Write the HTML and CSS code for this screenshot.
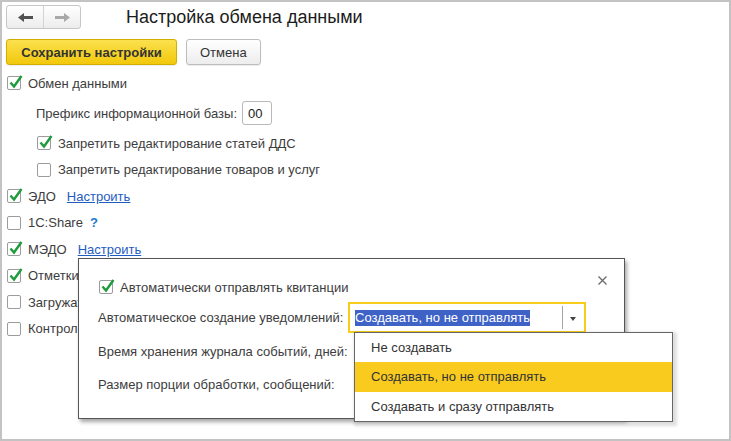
FILE: index.html
```html
<!DOCTYPE html>
<html lang="ru">
<head>
    <meta charset="UTF-8">
    <title>Настройка обмена данными</title>
    <link rel="stylesheet" href="styles.css">
</head>
<body>
<div class="window">

    <div class="head">
        <div class="nav">
            <span class="nav-btn">
                <svg width="15" height="9" viewBox="0 0 15 9"><polygon points="0,4.5 6,0 6,3 15,3 15,6 6,6 6,9" fill="#505050"/></svg>
            </span>
            <span class="nav-btn">
                <svg width="15" height="9" viewBox="0 0 15 9"><polygon points="15,4.5 9,0 9,3 0,3 0,6 9,6 9,9" fill="#a8a8a8"/></svg>
            </span>
        </div>
        <h1 class="title">Настройка обмена данными</h1>
    </div>

    <div class="toolbar">
        <button class="btn btn-main">Сохранить настройки</button>
        <button class="btn">Отмена</button>
    </div>

    <div class="options">
        <div class="row row-first">
            <span class="check on"><svg width="16" height="16" viewBox="0 0 16 16"><path d="M2.5 8.5 L6 12.5 L13.5 2" /></svg></span>
            Обмен данными
        </div>
        <div class="row row-prefix sub">
            Префикс информационной базы:
            <span class="field">00</span>
        </div>
        <div class="row sub">
            <span class="check on"><svg width="16" height="16" viewBox="0 0 16 16"><path d="M2.5 8.5 L6 12.5 L13.5 2" /></svg></span>
            Запретить редактирование статей ДДС
        </div>
        <div class="row sub">
            <span class="check"></span>
            Запретить редактирование товаров и услуг
        </div>
        <div class="row">
            <span class="check on"><svg width="16" height="16" viewBox="0 0 16 16"><path d="M2.5 8.5 L6 12.5 L13.5 2" /></svg></span>
            ЭДО <a class="link" href="#">Настроить</a>
        </div>
        <div class="row">
            <span class="check"></span>
            1C:Share <span class="help">?</span>
        </div>
        <div class="row">
            <span class="check on"><svg width="16" height="16" viewBox="0 0 16 16"><path d="M2.5 8.5 L6 12.5 L13.5 2" /></svg></span>
            МЭДО <a class="link link-medo" href="#">Настроить</a>
        </div>
        <!-- эти строки закрыты окном, видно только начало -->
        <div class="row cut">
            <span class="check on"><svg width="16" height="16" viewBox="0 0 16 16"><path d="M2.5 8.5 L6 12.5 L13.5 2" /></svg></span>
            <span class="cut-text">Отметки о прочтении</span>
        </div>
        <div class="row cut">
            <span class="check"></span>
            <span class="cut-text">Загружать документы</span>
        </div>
        <div class="row cut">
            <span class="check"></span>
            <span class="cut-text">Контролировать сроки</span>
        </div>
    </div>

    <!-- окно настройки МЭДО -->
    <div class="popup">
        <span class="close">
            <svg width="9" height="9" viewBox="0 0 9 9"><path d="M0.5 0.5 L8.5 8.5 M8.5 0.5 L0.5 8.5" /></svg>
        </span>
        <div class="prow prow-check">
            <span class="check on"><svg width="16" height="16" viewBox="0 0 16 16"><path d="M2.5 8.5 L6 12.5 L13.5 2" /></svg></span>
            Автоматически отправлять квитанции
        </div>
        <div class="prow">
            <span class="plabel">Автоматическое создание уведомлений:</span>
            <div class="combo">
                <span class="combo-text"><span class="selected">Создавать, но не отправлять</span></span>
                <span class="combo-arrow"></span>
            </div>
        </div>
        <div class="prow">
            <span class="plabel">Время хранения журнала событий, дней:</span>
        </div>
        <div class="prow">
            <span class="plabel">Размер порции обработки, сообщений:</span>
        </div>
    </div>

    <ul class="dropdown">
        <li>Не создавать</li>
        <li class="active">Создавать, но не отправлять</li>
        <li>Создавать и сразу отправлять</li>
    </ul>

</div>
</body>
</html>
```

FILE: styles.css
```css
body {
    margin: 0;
    font-family: "Liberation Sans", Arial, sans-serif;
    font-size: 13px;
    color: #3d3d3d;
    background: #fff;
}

.window {
    position: relative;
    width: 731px;
    height: 441px;
    box-sizing: border-box;
    border: 2px solid #c3c3c3;
    background: #fff;
}

/* header */
.head {
    display: flex;
    align-items: center;
    padding: 3px 4px 0;
}

.nav {
    display: flex;
    height: 24px;
    box-sizing: border-box;
    border: 1px solid #c6c6c6;
    border-radius: 3px;
    background: linear-gradient(#ffffff, #ececec);
}

.nav-btn {
    width: 36px;
    display: flex;
    align-items: center;
    justify-content: center;
}

.nav-btn + .nav-btn {
    border-left: 1px solid #d4d4d4;
}

.title {
    margin: 0 0 0 45px;
    font-size: 18px;
    font-weight: normal;
    color: #1c1c1c;
}

/* buttons */
.toolbar {
    display: flex;
    gap: 9px;
    margin-top: 10px;
    padding-left: 4px;
}

.btn {
    height: 26px;
    padding: 0 13px;
    font-family: inherit;
    font-size: 13px;
    color: #333;
    border: 1px solid #bdbdbd;
    border-radius: 3px;
    background: linear-gradient(#ffffff, #ededed);
    box-shadow: 0 1px 1px rgba(0, 0, 0, 0.08);
}

.btn-main {
    width: 171px;
    font-weight: bold;
    border-color: #d3ae00;
    background: linear-gradient(#fbe14f, #f2c80c);
}

/* options */
.options {
    padding: 5px 0 0 5px;
}

.row {
    display: flex;
    align-items: center;
    height: 26.5px;
    white-space: nowrap;
}

.row-prefix {
    height: 33.5px;
    padding-left: 29px !important;
}

.sub {
    padding-left: 30px;
}

.cut-text {
    width: 50px;
    overflow: hidden;
}

.check {
    position: relative;
    flex: none;
    width: 14px;
    height: 14px;
    box-sizing: border-box;
    margin-right: 7px;
    border: 1px solid #9c9c9c;
    border-radius: 2px;
    background: #fff;
}

.check svg {
    position: absolute;
    left: 0;
    top: -3px;
}

.check path {
    fill: none;
    stroke: #1f9a3d;
    stroke-width: 2.4;
}

.field {
    display: inline-flex;
    align-items: center;
    width: 30px;
    height: 24px;
    box-sizing: border-box;
    margin-left: 5px;
    padding-left: 5px;
    border: 1px solid #b9b9b9;
    border-radius: 3px;
    color: #222;
}

.link {
    margin-left: 11px;
    color: #1f5cc0;
}

.help {
    margin-left: 7px;
    color: #2478c9;
    font-weight: bold;
}

/* popup */
.popup {
    position: absolute;
    left: 76px;
    top: 256px;
    width: 547px;
    height: 161px;
    box-sizing: border-box;
    padding: 14px 0 0 19px;
    border: 1px solid #555;
    background: #fff;
    box-shadow: 2px 3px 4px rgba(0, 0, 0, 0.35);
}

.close {
    position: absolute;
    right: 17px;
    top: 17px;
    line-height: 0;
}

.close path {
    stroke: #6a6a6a;
    stroke-width: 1.3;
}

.prow {
    display: flex;
    align-items: center;
    height: 33.5px;
    white-space: nowrap;
}

.prow-check {
    height: 28px;
    padding-left: 1px;
}

.plabel {
    width: 250px;
    flex: none;
}

.combo {
    display: flex;
    width: 238px;
    height: 31px;
    box-sizing: border-box;
    border: 2px solid #f7cd19;
    background: #fff;
}

.combo-text {
    flex: 1;
    display: flex;
    align-items: center;
    padding-left: 5px;
}

.selected {
    line-height: 16px;
    background: #3e62c6;
    color: #fff;
}

.combo-arrow {
    position: relative;
    width: 21px;
    margin: 2px 0;
    border-left: 1px solid #a4a4a4;
}

.combo-arrow::after {
    content: "";
    position: absolute;
    left: 7px;
    top: 11px;
    border-left: 3.5px solid transparent;
    border-right: 3.5px solid transparent;
    border-top: 4px solid #444;
}

/* dropdown list */
.dropdown {
    position: absolute;
    left: 352px;
    top: 330px;
    width: 319px;
    height: 90px;
    box-sizing: border-box;
    margin: 0;
    padding: 0;
    list-style: none;
    border: 1px solid #666;
    background: #fff;
    box-shadow: 2px 2px 3px 2px rgba(0, 0, 0, 0.13);
}

.dropdown li {
    height: 29.3px;
    display: flex;
    align-items: center;
    padding-left: 16px;
    color: #333;
}

.dropdown li.active {
    background: #f9cb1f;
}
```
